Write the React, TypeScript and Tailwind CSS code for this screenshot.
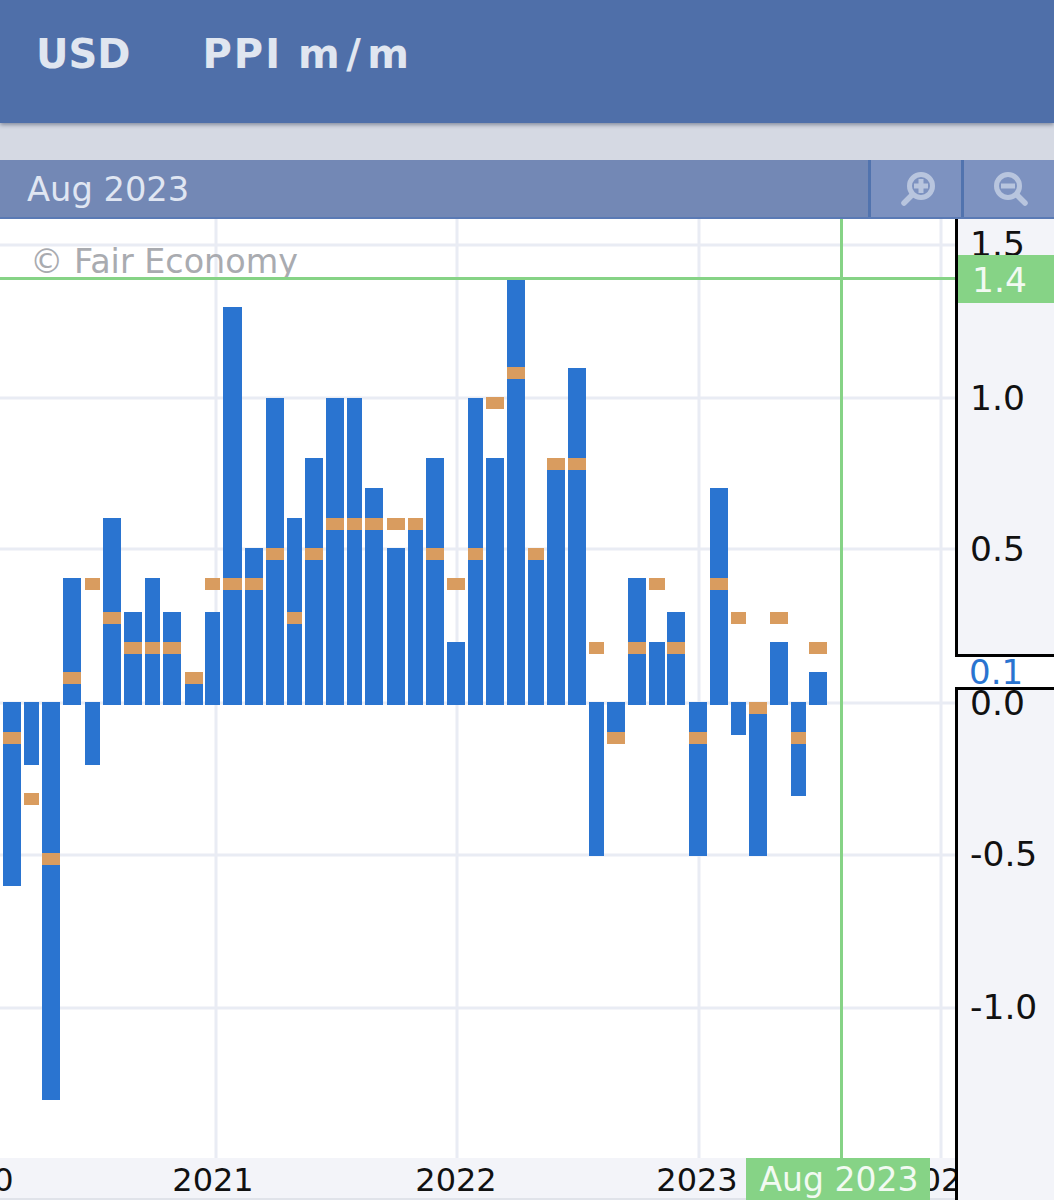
const FONT = "font-['DejaVu_Sans','Liberation_Sans',sans-serif]";

// x, width, top, bottom, centre of the forecast tick
const bars: [number, number, number, number, number][] = [
  [3, 18, 702, 886, 738],
  [24, 15, 702, 765, 799],
  [42, 18, 702, 1100, 859],
  [63, 18, 578, 705, 678],
  [85, 15, 702, 765, 584],
  [103, 18, 518, 705, 618],
  [124, 18, 612, 705, 648],
  [145, 15, 578, 705, 648],
  [163, 18, 612, 705, 648],
  [185, 18, 684, 705, 678],
  [205, 15, 612, 705, 584],
  [223, 19, 307, 705, 584],
  [245, 18, 548, 705, 584],
  [266, 18, 398, 705, 554],
  [287, 15, 518, 705, 618],
  [305, 18, 458, 705, 554],
  [326, 18, 398, 705, 524],
  [347, 15, 398, 705, 524],
  [365, 18, 488, 705, 524],
  [387, 18, 548, 705, 524],
  [408, 15, 530, 705, 524],
  [426, 18, 458, 705, 554],
  [447, 18, 642, 705, 584],
  [468, 15, 398, 705, 554],
  [486, 18, 458, 705, 403],
  [507, 18, 280, 705, 373],
  [528, 16, 548, 705, 554],
  [547, 18, 464, 705, 464],
  [568, 18, 368, 705, 464],
  [589, 15, 702, 856, 648],
  [607, 18, 702, 733, 738],
  [628, 18, 578, 705, 648],
  [649, 16, 642, 705, 584],
  [667, 18, 612, 705, 648],
  [689, 18, 702, 856, 738],
  [710, 18, 488, 705, 584],
  [731, 15, 702, 735, 618],
  [749, 18, 708, 856, 708],
  [770, 18, 642, 705, 618],
  [791, 15, 702, 796, 738],
  [809, 18, 672, 705, 648],
];

const gridY = [245, 398, 549, 703, 855, 1008];
const gridX = [216, 457, 699, 941];

const yLabels: [string, number][] = [
  ["1.5", 256],
  ["1.0", 410],
  ["0.5", 561],
  ["0.0", 715],
  ["-0.5", 866],
  ["-1.0", 1019],
];

const xLabels: [string, number][] = [
  ["2020", -27],
  ["2021", 213],
  ["2022", 456],
  ["2023", 697],
  ["2024", 941],
];

function ZoomIcon({ mode }: { mode: "in" | "out" }) {
  const cx = mode === "in" ? 21 : 15;
  const cy = 15;
  return (
    <svg width="36" height="36" viewBox="0 0 36 36" fill="none" stroke="#b8c5de">
      <circle cx={cx} cy={cy} r="11.5" strokeWidth="5" />
      <path
        d={mode === "in" ? "M12 24 L4 32" : "M24 24 L32 32"}
        strokeWidth="5.5"
        strokeLinecap="round"
      />
      <path d={`M${cx - 7} ${cy} H${cx + 7}`} strokeWidth="5" />
      {mode === "in" && <path d={`M${cx} ${cy - 7} V${cy + 7}`} strokeWidth="5" />}
    </svg>
  );
}

function Chart() {
  return (
    <svg
      width="1054"
      height="981"
      viewBox="0 219 1054 981"
      className="block"
      fontFamily="'DejaVu Sans', 'Liberation Sans', sans-serif"
      fontSize="32"
    >
      {gridY.map((y) => (
        <rect key={y} x="0" y={y - 1.5} width="955" height="3" fill="#e9ecf4" />
      ))}
      {gridX.map((x) => (
        <rect key={x} x={x - 1.5} y="219" width="3" height="939" fill="#e9ecf4" />
      ))}

      <text x="30" y="273" fontSize="33.4" fill="#a9abb0">
        © Fair Economy
      </text>

      <rect x="0" y="277" width="955" height="3" fill="#86d386" />
      <rect x="840" y="219" width="3" height="939" fill="#86d386" />

      {bars.map(([x, w, top, bottom]) => (
        <rect key={x} x={x} y={top} width={w} height={bottom - top} fill="#2a74d0" />
      ))}
      {bars.map(([x, w, , , f]) => (
        <rect key={x} x={x} y={f - 6} width={w} height="12" fill="#d99c5f" />
      ))}

      {/* x axis */}
      <rect x="0" y="1158" width="955" height="40" fill="#f3f4f9" />
      <rect x="0" y="1198" width="955" height="2" fill="#e0e3ea" />
      {xLabels.map(([label, x]) => (
        <text key={label} x={x} y="1191" textAnchor="middle" fill="#111111">
          {label}
        </text>
      ))}
      <rect x="746" y="1158" width="184" height="42" fill="#86d386" />
      <text x="839" y="1191" textAnchor="middle" fontSize="33" fill="#f2faf2">
        Aug 2023
      </text>

      {/* y axis */}
      <rect x="958" y="219" width="96" height="436" fill="#f3f4f9" />
      <rect x="958" y="688" width="96" height="512" fill="#f3f4f9" />
      <path d="M956.5 219 V655.5 H1054" fill="none" stroke="#000000" strokeWidth="3" />
      <path d="M1054 688.5 H956.5 V1200" fill="none" stroke="#000000" strokeWidth="3" />
      {yLabels.map(([label, y]) => (
        <text key={label} x="970" y={y} fontSize="34.5" fill="#111111">
          {label}
        </text>
      ))}
      <rect x="958" y="255" width="96" height="48" fill="#86d386" />
      <text x="972" y="292" fontSize="34.5" fill="#f2faf2">
        1.4
      </text>
      <text x="969" y="684" fontSize="34" fill="#2a74d0">
        0.1
      </text>
    </svg>
  );
}

export default function App() {
  return (
    <div className={`${FONT} w-[1054px] h-[1200px] overflow-hidden bg-white`}>
      <header className="relative z-10 flex h-[123px] items-start gap-[72px] bg-[#4f6fa9] pl-[36px] pt-[30px] text-[40px] leading-[48px] font-bold text-[#e0e6f0] shadow-[0_2px_4px_rgba(40,50,80,0.45)]">
        <span>USD</span>
        <span>
          <span className="tracking-[2px]">PPI </span>
          <span className="tracking-[6.5px]">m/m</span>
        </span>
      </header>
      <div className="h-[37px] bg-[#d5d9e3]" />
      <div className="flex h-[59px] border-b-[2px] border-[#5a7ab5] bg-[#7388b5]">
        <div className="flex-1 pl-[27px] pt-[10px] text-[33.7px] leading-[40px] text-[#e0e6f2]">
          Aug 2023
        </div>
        <div className="flex w-[93px] items-center justify-center border-l-[3px] border-[#5173ae] bg-[#7d92c0] pl-[4px]">
          <ZoomIcon mode="in" />
        </div>
        <div className="flex w-[93px] items-center justify-center border-l-[3px] border-[#5173ae] bg-[#7d92c0] pl-[3px]">
          <ZoomIcon mode="out" />
        </div>
      </div>
      <Chart />
    </div>
  );
}
